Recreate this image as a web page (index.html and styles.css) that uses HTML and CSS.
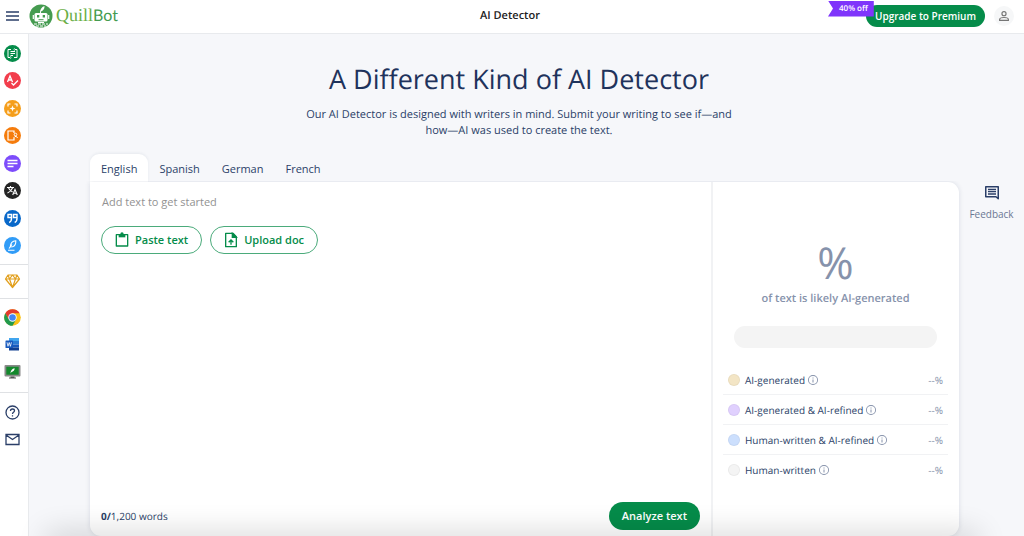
FILE: index.html
```html
<!DOCTYPE html>
<html lang="en">
<head>
<meta charset="utf-8">
<meta name="viewport" content="width=device-width, initial-scale=1">
<title>AI Detector</title>
<link rel="stylesheet" href="styles.css">
</head>
<body>
<svg class="sprite" aria-hidden="true">
  <symbol id="info" viewBox="0 0 24 24"><path fill="currentColor" d="M11 7h2v2h-2zm0 4h2v6h-2zm1-9a10 10 0 1 0 0 20 10 10 0 0 0 0-20zm0 18.200a8.200 8.200 0 1 1 0-16.400 8.200 8.200 0 0 1 0 16.400z"/></symbol>
</svg>
<header class="topbar">
  <div class="brand">
    <button class="icon-button menu" aria-label="Open menu">
      <svg width="14" height="10" viewBox="0 0 14 10"><path d="M0 1h13M0 5h13M0 9h13" stroke="#2b3f68" stroke-width="1.500"/></svg>
    </button>
    <a class="logo" href="#" aria-label="QuillBot">
      <svg width="24" height="24" viewBox="0 0 24 24">
        <circle cx="12" cy="12" r="11.500" fill="#459b50"/>
        <rect x="5.500" y="9" width="13" height="8.500" rx="1.500" fill="#fff"/>
        <path d="M4.300 11v4M19.700 11v4" stroke="#fff" stroke-width="1.200"/>
        <path d="M11 9.500c-.3-4 1.500-6.500 4.500-7.500C15.800 5 14 6.700 12 7.400v2z" fill="#fff"/>
        <rect x="8" y="11" width="2.300" height="2.500" fill="#459b50"/><rect x="13.700" y="11" width="2.300" height="2.500" fill="#459b50"/>
        <path d="M9.500 15.700h5" stroke="#459b50"/>
        <path d="M5 20h14M7 22h10" stroke="#fff" stroke-dasharray="3 1"/>
        <path d="M9 18.500h6" stroke="#fff"/>
      </svg>
      <span class="wordmark"><span class="quill">Quill</span><span class="bot">Bot</span></span>
    </a>
  </div>
  <div class="page-name">AI Detector</div>
  <div class="account">
    <div class="upgrade-wrap">
      <button class="pill solid upgrade">Upgrade to Premium</button>
      <span class="discount">40% off</span>
    </div>
    <button class="icon-button avatar" aria-label="Account">
      <svg width="14" height="14" viewBox="0 0 24 24" fill="none" stroke="#757575" stroke-width="2"><circle cx="12" cy="8" r="3.500"/><path d="M4.500 19.500v-1.500c0-2.500 4.500-3.500 7.500-3.500s7.500 1 7.500 3.500v1.500z"/></svg>
    </button>
  </div>
</header>
<div class="shell">
  <nav class="sidebar" aria-label="Tools">
    <div class="nav-group tools">
      <a href="#" class="tool" aria-label="Paraphraser"><svg viewBox="0 0 17 17"><circle cx="8.500" cy="8.500" r="8.500" fill="#058c4a"/><g fill="none" stroke="#fff"><path d="M7 4.500H4v8h2M10 12.500h3v-8h-2"/><path d="M6.500 6.500h4.500M6.500 8.500H11M6.500 10.500H9"/><path d="M6 11.300l1.300 1.200L6 13.700M11 3.300L9.700 4.500 11 5.700" stroke-width=".7"/></g></svg></a>
      <a href="#" class="tool" aria-label="Grammar Checker"><svg viewBox="0 0 17 17"><circle cx="8.500" cy="8.500" r="8.500" fill="#f23d4c"/><path d="M3.500 10L6 4l2.500 6M4.500 8h3M7.500 11l2 2L14 8.500" fill="none" stroke="#fff" stroke-width="1.300"/></svg></a>
      <a href="#" class="tool" aria-label="AI Detector"><svg viewBox="0 0 17 17"><circle cx="8.500" cy="8.500" r="8.500" fill="#f59e1b"/><path d="M4 6.500V4h2.500M10.500 4H13v2.500M13 10.500V13h-2.500M6.500 13H4v-2.500" fill="none" stroke="#fff" stroke-width="1.200"/><path d="M8.500 5.500l.8 2.200 2.200.8-2.200.8-.8 2.200-.8-2.200-2.200-.8 2.200-.8z" fill="#fff"/></svg></a>
      <a href="#" class="tool" aria-label="AI Humanizer"><svg viewBox="0 0 17 17"><circle cx="8.500" cy="8.500" r="8.500" fill="#f57c0c"/><path d="M10 6V4H4v9h6v-2" fill="none" stroke="#fff" stroke-width="1.200"/><circle cx="11.500" cy="7.500" r="1.300" fill="none" stroke="#fff"/><path d="M9.500 11l1.500-1.500h1.500L13.500 11" fill="none" stroke="#fff"/></svg></a>
      <a href="#" class="tool" aria-label="Summarizer"><svg viewBox="0 0 17 17"><circle cx="8.500" cy="8.500" r="8.500" fill="#7d4cfb"/><path d="M3.500 5.500h10M3.500 8.500h10M3.500 11.500h6" stroke="#fff" stroke-width="1.500"/></svg></a>
      <a href="#" class="tool" aria-label="Translator"><svg viewBox="0 0 17 17"><circle cx="8.500" cy="8.500" r="8.500" fill="#242424"/><path d="M3 5.500h7M6.500 4v1.500M4.500 6c1 2 2.500 3 4 4M8.500 6c-.8 2-2.500 4-5 5M8.700 13l2.300-5.500 2.300 5.500M9.500 11.300h3" fill="none" stroke="#fff" stroke-width="1.100"/></svg></a>
      <a href="#" class="tool" aria-label="Citation Generator"><svg viewBox="0 0 17 17"><circle cx="8.500" cy="8.500" r="8.500" fill="#0968c9"/><path d="M7.500 7.500H4v-3h3.500v4c0 2-.8 3.300-2.300 4M13 7.500H9.500v-3H13v4c0 2-.8 3.300-2.300 4" fill="none" stroke="#fff" stroke-width="1.400"/></svg></a>
      <a href="#" class="tool" aria-label="Flow"><svg viewBox="0 0 17 17"><circle cx="8.500" cy="8.500" r="8.500" fill="#319cf7"/><path d="M5 11.500l3-4M6.200 10C6.500 6.500 8.500 4 11.800 3.800c.2 3-.9 5.300-3.300 6zM4 13.200h6.500" fill="none" stroke="#fff" stroke-width="1.100"/></svg></a>
    </div>
    <div class="nav-group">
      <a href="#" class="tool" aria-label="Premium"><svg viewBox="0 0 17 17" fill="none" stroke="#e2a01e" stroke-width="1.200" stroke-linejoin="round"><path d="M4 2h9l2.500 4-7 8.500L1.500 6zM1.500 6h14M5.500 6l3 8.500 3-8.500M4 2l1.500 4 3-4 3 4L13 2"/></svg></a>
    </div>
    <div class="nav-group apps">
      <a href="#" class="tool" aria-label="QuillBot for Chrome"><svg viewBox="0 0 17 17"><circle cx="8.500" cy="8.500" r="8.300" fill="#fbc116"/><path d="M1.300 4.350A8.300 8.300 0 0 1 15.700 4.350H8.500L4.900 10.600z" fill="#e33b2e"/><path d="M1.300 4.350A8.300 8.300 0 0 0 8.500 16.800L12.100 10.600H4.900z" fill="#229a4d"/><circle cx="8.500" cy="8.500" r="4.200" fill="#fff"/><circle cx="8.500" cy="8.500" r="3.300" fill="#4285f4"/></svg></a>
      <a href="#" class="tool" aria-label="QuillBot for Word"><svg viewBox="0 0 17 17"><path d="M5 2h10v3.500H5z" fill="#41a5ee"/><path d="M5 5h10v3.500H5z" fill="#2b7cd3"/><path d="M5 8.500h10v3H5z" fill="#185abd"/><path d="M5 11.500h10v3H5z" fill="#103f91"/><rect x="1.500" y="4.500" width="7.500" height="7.500" rx=".6" fill="#185abd"/><path d="M3 6.300l1 4 1.200-3.800 1.200 3.800 1-4" fill="none" stroke="#fff" stroke-width=".8"/></svg></a>
      <a href="#" class="tool" aria-label="QuillBot for desktop"><svg viewBox="0 0 17 17"><rect x=".5" y="2" width="16" height="11.500" rx="1" fill="#8a8a8a"/><rect x="2.300" y="3.700" width="12.400" height="8" fill="#13882c"/><path d="M6.500 10.500c0-3 1.500-4.800 4.200-5.200-.2 2-1.200 3.400-3.200 3.700z" fill="#fff"/><path d="M6.500 13.500h4v1H12v1H5v-1h1.500z" fill="#555"/></svg></a>
    </div>
    <div class="nav-group help">
      <a href="#" class="tool" aria-label="Help"><svg viewBox="0 0 17 17" fill="none" stroke="#2b3f68" stroke-width="1.300"><circle cx="8.500" cy="8.500" r="6.500"/><path d="M6.500 7c0-1.300.9-2 2-2s2 .8 2 1.800c0 1.500-2 1.600-2 3.200M8.500 11.200v1.300"/></svg></a>
      <a href="#" class="tool" aria-label="Contact us"><svg viewBox="0 0 17 17" fill="none" stroke="#2b3f68" stroke-width="1.300"><path d="M2 3.500h13v10H2zM2 4l6.500 4.500L15 4"/></svg></a>
    </div>
  </nav>
  <main class="content">
    <section class="hero">
      <h1>A Different Kind of AI Detector</h1>
      <p>Our AI Detector is designed with writers in mind. Submit your writing to see if—and how—AI was used to create the text.</p>
    </section>
    <div class="workspace">
      <div class="detector">
        <div class="tabs" role="tablist" aria-label="Language">
          <button class="tab active" role="tab" aria-selected="true">English</button>
          <button class="tab" role="tab" aria-selected="false">Spanish</button>
          <button class="tab" role="tab" aria-selected="false">German</button>
          <button class="tab" role="tab" aria-selected="false">French</button>
        </div>
        <div class="card">
          <section class="editor">
            <textarea class="editor-input" rows="1" aria-label="Text to analyze" placeholder="Add text to get started"></textarea>
            <div class="editor-actions">
              <button class="pill outline"><svg width="16" height="16" viewBox="0 0 24 24" fill="none" stroke="currentColor" stroke-width="2"><path d="M3.500 4h17v17h-17z" stroke-linejoin="round"/><path d="M7 3h10v5H7z" fill="currentColor" stroke="none"/><circle cx="12" cy="3" r="2.500" fill="currentColor" stroke="none"/></svg>Paste text</button>
              <button class="pill outline"><svg width="16" height="16" viewBox="0 0 24 24" fill="none" stroke="currentColor" stroke-width="2"><path d="M4 2h11l5 5v15H4z" stroke-linejoin="round"/><path d="M14 2v6h6z" fill="currentColor"/><path d="M12 19v-7M8.500 15.500L12 12l3.500 3.500"/></svg>Upload doc</button>
            </div>
            <div class="editor-footer">
              <span class="count"><b>0/</b>1,200 words</span>
              <button class="pill solid">Analyze text</button>
            </div>
          </section>
          <section class="results" aria-label="Results">
            <div class="score">%</div>
            <div class="score-label">of text is likely AI-generated</div>
            <div class="meter"></div>
            <ul class="breakdown">
              <li><span class="dot ai"></span><span>AI-generated</span><button class="icon-button info" aria-label="About AI-generated"><svg width="12" height="12"><use href="#info"/></svg></button><span class="percent">--%</span></li>
              <li><span class="dot refined"></span><span>AI-generated &amp; AI-refined</span><button class="icon-button info" aria-label="About AI-generated and AI-refined"><svg width="12" height="12"><use href="#info"/></svg></button><span class="percent">--%</span></li>
              <li><span class="dot mixed"></span><span>Human-written &amp; AI-refined</span><button class="icon-button info" aria-label="About human-written and AI-refined"><svg width="12" height="12"><use href="#info"/></svg></button><span class="percent">--%</span></li>
              <li><span class="dot human"></span><span>Human-written</span><button class="icon-button info" aria-label="About human-written"><svg width="12" height="12"><use href="#info"/></svg></button><span class="percent">--%</span></li>
            </ul>
          </section>
        </div>
      </div>
      <button class="feedback"><svg width="16" height="16" viewBox="0 0 16 16" fill="none" stroke="#2b3f68" stroke-width="1.500"><path d="M1.750 1.750h12.500v12L12 11.750H1.750z" stroke-linejoin="round"/><path d="M4 4.500h8M4 6.700h8M4 9h8" stroke-width="1.300"/></svg>Feedback</button>
    </div>
  </main>
</div>
<div class="bottom-shade"></div>
</body>
</html>
```

FILE: styles.css
```css
* { box-sizing: border-box; }
body {
  margin: 0;
  height: 100vh;
  display: flex;
  flex-direction: column;
  overflow: hidden;
  background: #f6f7fa;
  color: #2b3f68;
  font: 11px/16px "Open Sans", "Noto Sans", sans-serif;
  text-rendering: geometricPrecision;
}
button {
  margin: 0;
  padding: 0;
  border: 0;
  background: none;
  color: inherit;
  font: inherit;
  cursor: pointer;
}
svg { display: block; flex: none; }
.sprite { position: absolute; width: 0; height: 0; }
.icon-button { display: flex; align-items: center; justify-content: center; }

.topbar {
  flex: none;
  height: 34px;
  display: grid;
  grid-template-columns: 1fr auto 1fr;
  align-items: center;
  padding: 0 10px 2px 6px;
  background: #fff;
  border-bottom: 1px solid #e8eaed;
}
.brand { display: flex; align-items: center; gap: 9px; }
.logo { display: flex; align-items: center; gap: 3px; text-decoration: none; }
.wordmark { font-size: 16px; line-height: 22px; }
.quill { color: #6aae45; font-family: "Liberation Serif", serif; font-size: 18px; }
.bot { color: #459b50; font-family: Lato, sans-serif; }
.page-name { color: #222; font-weight: 600; }
.account { display: flex; justify-content: flex-end; align-items: center; gap: 9px; }
.upgrade-wrap { position: relative; }
.discount {
  position: absolute;
  top: -4px;
  left: -38px;
  padding: 0 6px 0 11px;
  background: #7f35fb;
  color: #fff;
  font-size: 8px;
  font-weight: 600;
  white-space: nowrap;
  clip-path: polygon(0 0, 100% 0, 100% 100%, 0 100%, 5px 50%);
}
.avatar { width: 20px; height: 20px; border-radius: 50%; background: #f6f7f8; }

.pill {
  display: flex;
  align-items: center;
  justify-content: center;
  height: 28px;
  padding: 0 13px;
  border-radius: 14px;
  font-weight: 600;
}
.solid { background: #058c4a; color: #fff; }
.upgrade { height: 22px; padding: 0 9px; font-size: 10px; }
.outline { gap: 5px; padding: 0 13px 0 12px; border: 1px solid #4bab7b; color: #058c4a; }

.shell { flex: 1; min-height: 0; display: flex; }
.sidebar {
  width: 29px;
  flex: none;
  background: #fff;
  border-right: 1px solid #e8eaed;
}
.nav-group {
  display: flex;
  flex-direction: column;
  align-items: center;
  gap: 10px;
  padding: 8px 4px 8px 0;
  border-bottom: 1px solid #dfe1e4;
}
.tools { height: 231px; padding: 11px 4px 10px 0; justify-content: space-between; gap: 0; }
.apps { padding: 10px 4px 12px 0; }
.help { padding: 11px 4px 11px 0; border-bottom: 0; }
.tool { display: block; width: 17px; height: 17px; }

.content { flex: 1; display: flex; flex-direction: column; padding-left: 61px; }
.hero { padding: 27px 76px 0 0; text-align: center; }
h1 { margin: 0 0 10px; color: #1f335c; font-size: 27px; line-height: 36px; font-weight: 400; }
.hero p { max-width: 440px; margin: 0 auto; }
.workspace { flex: 1; display: flex; padding-top: 15px; }
.detector { flex: 1; display: flex; flex-direction: column; }
.tabs { display: flex; }
.tab { height: 28px; padding: 1px 11px 0; border-radius: 9px 9px 0 0; }
.active { background: #fff; box-shadow: 0 -1px 3px #1f335c12; }
.card {
  flex: 1;
  display: flex;
  background: #fff;
  border-radius: 0 11px 11px 11px;
  box-shadow: 0 0 5px #1f335c22;
  clip-path: inset(-1px -10px -10px -10px);
}
.editor { flex: 1; display: flex; flex-direction: column; padding: 12px 11px 6px; }
.editor-input {
  display: block;
  height: 16px;
  margin-bottom: 16px;
  padding: 0 1px;
  border: 0;
  outline: 0;
  resize: none;
  background: none;
  color: inherit;
  font: inherit;
}
.editor-input::placeholder { color: #929292; }
.editor-actions { display: flex; gap: 8px; }
.editor-footer { margin-top: auto; display: flex; justify-content: space-between; align-items: center; }
.count { font-size: 10px; }
.results {
  width: 248px;
  flex: none;
  padding: 55px 11px 0 10px;
  border-left: 2px solid #f1f2f4;
  color: #8692ab;
  text-align: center;
}
.score { font-size: 44px; line-height: 50px; }
.score-label { margin-top: 4px; font-weight: 600; }
.meter { height: 22px; margin: 19px 11px 17px; border-radius: 11px; background: #f4f4f4; }
.breakdown { margin: 0; padding: 0; list-style: none; font-size: 10px; }
.breakdown li {
  display: flex;
  align-items: center;
  height: 30px;
  padding: 0 5px;
  color: #2b3f68;
  border-bottom: 1px solid #f1f2f4;
}
.breakdown li:last-child { border-bottom: 0; }
.dot { width: 12px; height: 12px; margin-right: 5px; border: 1px solid #0000000a; border-radius: 50%; }
.ai { background: #f3e5c5; }
.refined { background: #e0d0fe; }
.mixed { background: #ccdffd; }
.human { background: #f4f4f4; }
.info { margin-left: 2px; color: #8692ab; }
.percent { margin-left: auto; color: #8692ab; }

.feedback {
  width: 65px;
  align-self: flex-start;
  display: flex;
  flex-direction: column;
  align-items: center;
  gap: 5px;
  padding-top: 31px;
  font-size: 10px;
  color: #6b7894;
}
.bottom-shade {
  position: fixed;
  left: 50px;
  right: 50px;
  bottom: -12px;
  height: 10px;
  pointer-events: none;
  box-shadow: 0 0 30px 4px #0003;
}
```
